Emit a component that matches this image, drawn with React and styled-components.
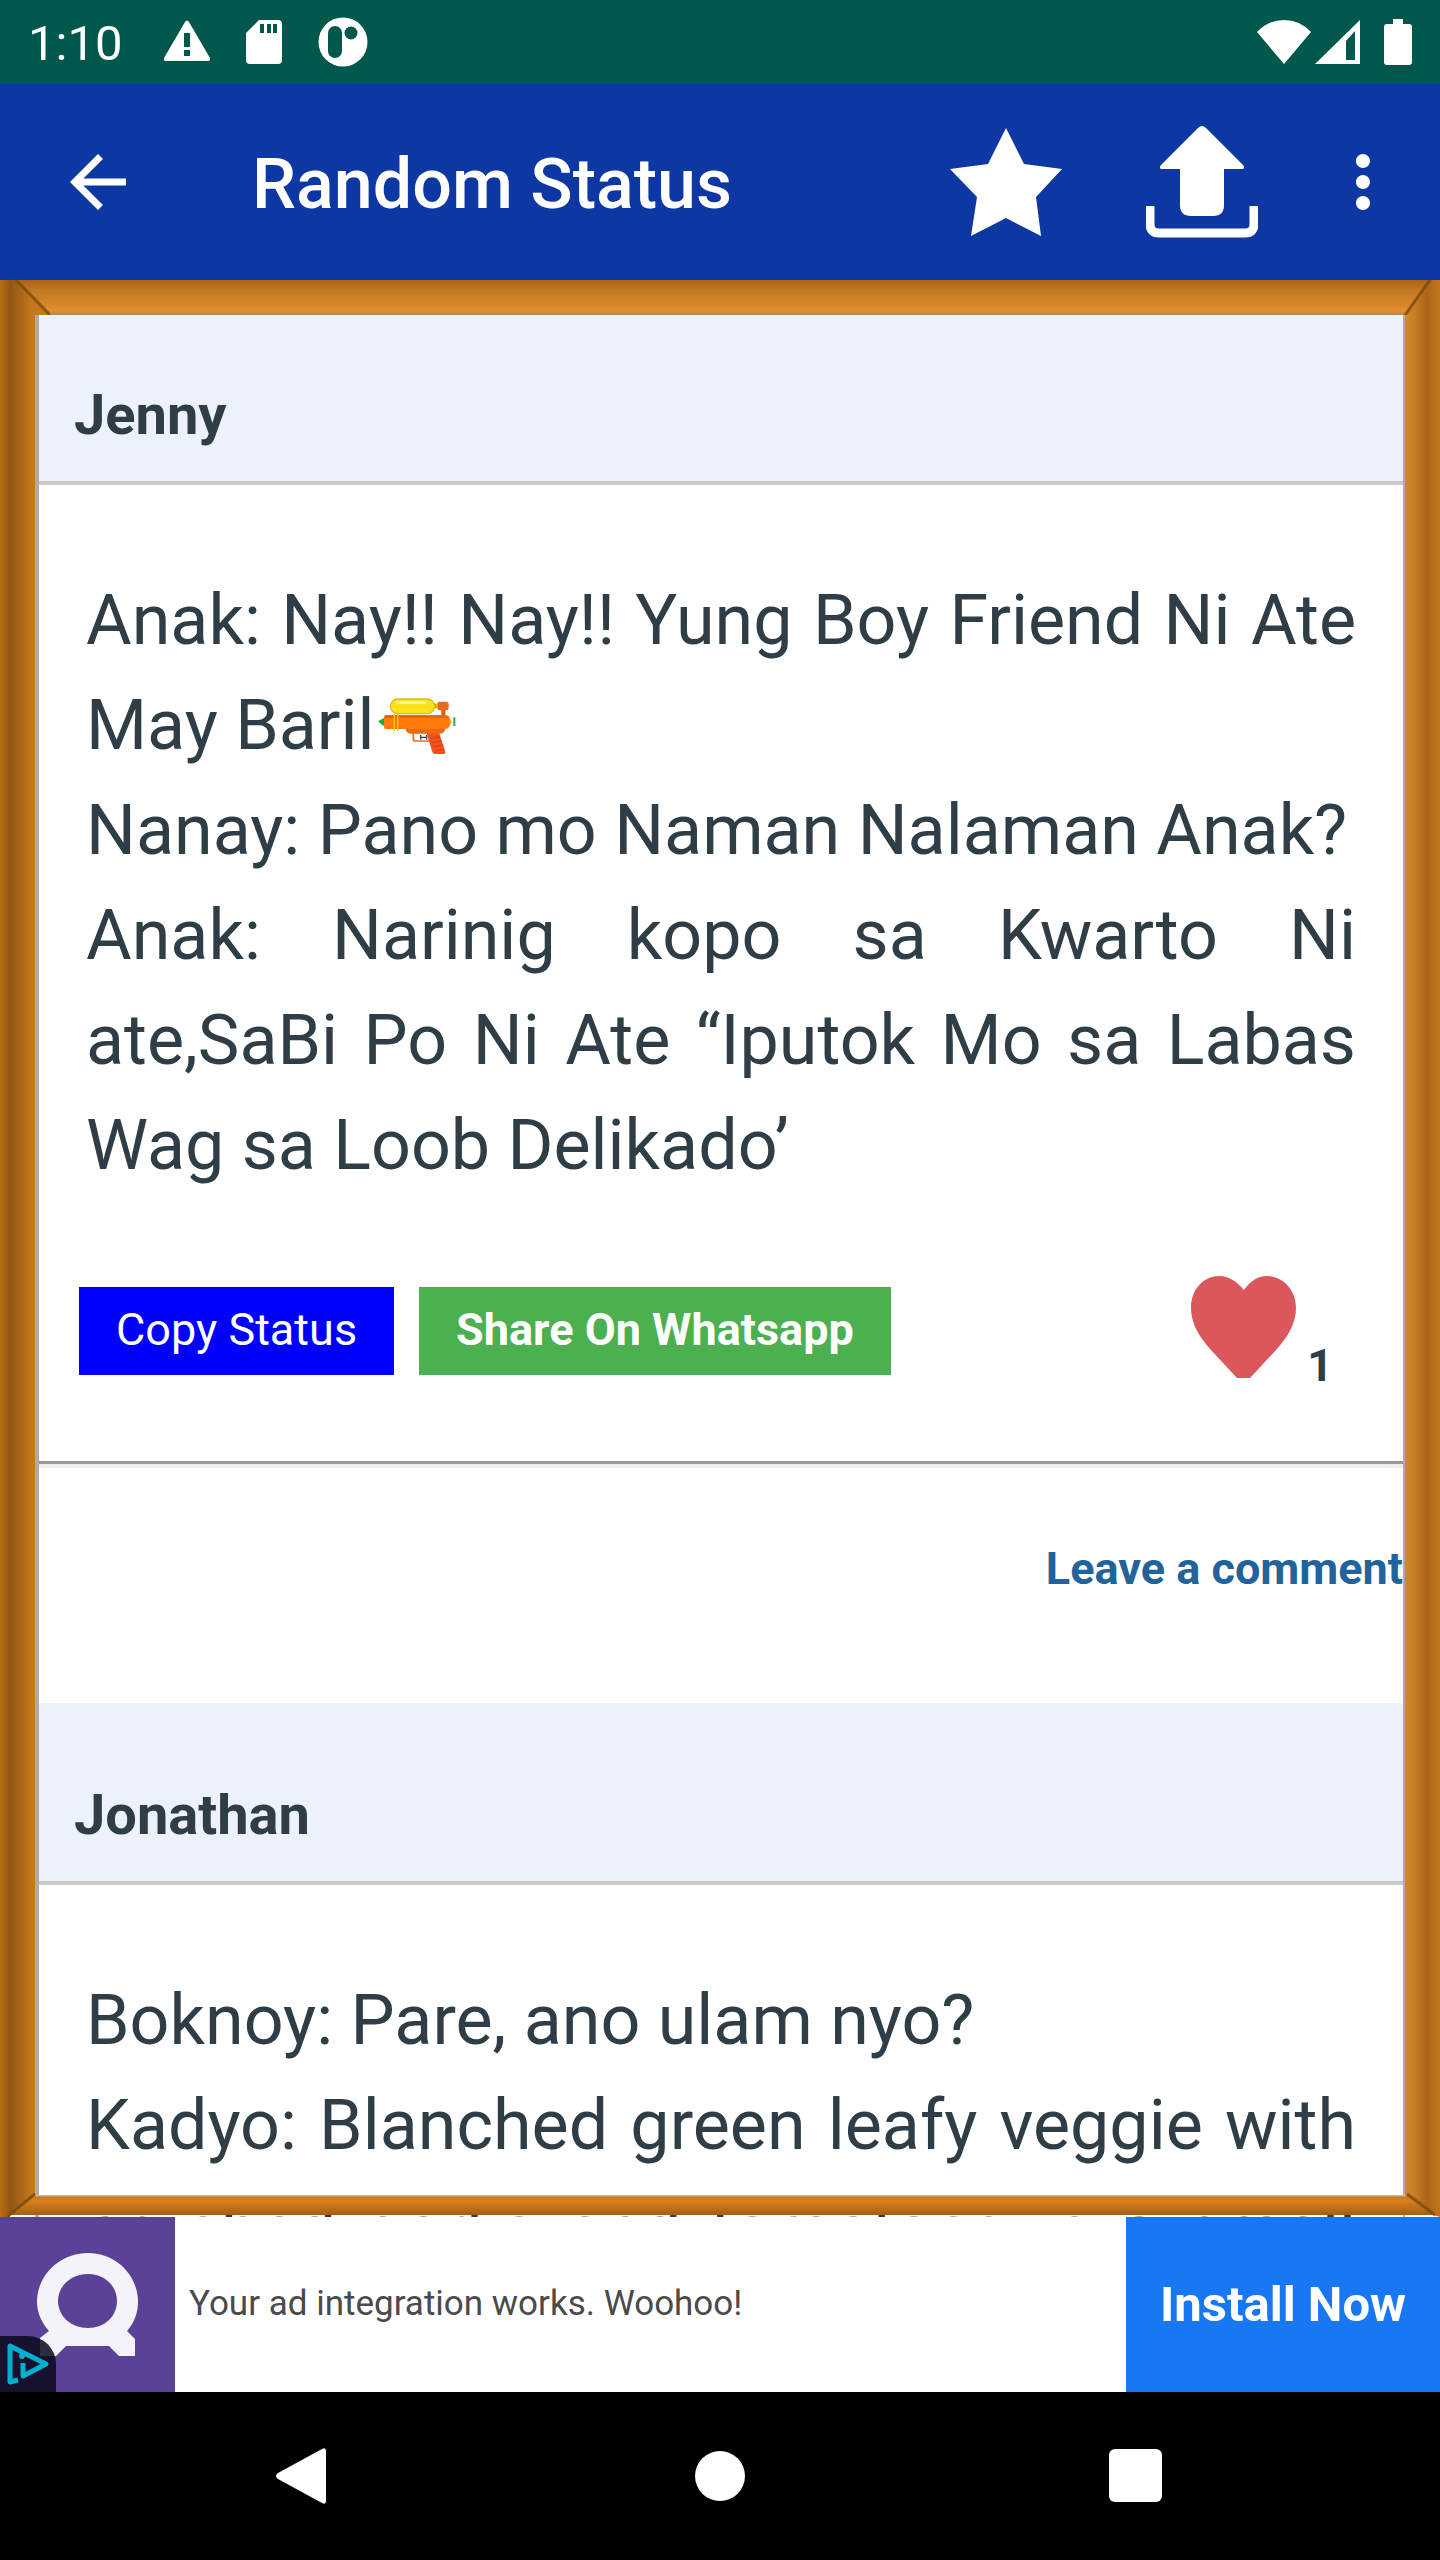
import React from 'react';
import styled, { createGlobalStyle } from 'styled-components';
import { MdArrowBack, MdMoreVert } from 'react-icons/md';

const posts = [
  {
    id: 1,
    author: 'Jenny',
    likes: 1,
    text: (
      <>
        Anak: Nay!! Nay!! Yung Boy Friend Ni Ate May Baril
        <WaterGun />
        <br />
        Nanay: Pano mo Naman Nalaman Anak?
        <br />
        Anak: Narinig kopo sa Kwarto Ni ate,SaBi&nbsp;Po Ni Ate “Iputok Mo sa Labas
        Wag sa Loob Delikado’
      </>
    ),
  },
  {
    id: 2,
    author: 'Jonathan',
    likes: 1,
    text: (
      <>
        Boknoy: Pare, ano ulam nyo?
        <br />
        Kadyo: Blanched green leafy veggie with crushed garlic and tomatoes in a small bowl
      </>
    ),
  },
];

export default function App() {
  return (
    <Screen>
      <GlobalStyle />
      <StatusBar>
        <Clock>1:10</Clock>
        <Notices>
          <WarningIcon />
          <SdCardIcon />
          <AppDotIcon />
        </Notices>
        <SystemIcons>
          <WifiIcon />
          <SignalIcon />
          <BatteryIcon />
        </SystemIcons>
      </StatusBar>

      <AppBar>
        <IconButton aria-label="Back">
          <MdArrowBack size={84} />
        </IconButton>
        <Title>Random Status</Title>
        <BarActions>
          <IconButton aria-label="Rate">
            <StarIcon />
          </IconButton>
          <IconButton aria-label="Share app">
            <UploadIcon />
          </IconButton>
        </BarActions>
        <IconButton aria-label="More options">
          <MdMoreVert size={84} />
        </IconButton>
      </AppBar>

      <Board>
        <Feed>
          {posts.map((post) => (
            <Post key={post.id} {...post} />
          ))}
        </Feed>
        <WoodFrame />
      </Board>

      <AdBanner>
        <AdLogo>
          <AdMark />
          <AdBadge>
            <AdChoicesIcon />
          </AdBadge>
        </AdLogo>
        <AdText>Your ad integration works. Woohoo!</AdText>
        <InstallButton>Install Now</InstallButton>
      </AdBanner>

      <NavBar>
        <NavButton aria-label="Back">
          <svg width="56" height="60" viewBox="0 0 56 60" fill="#fff">
            <path d="M2 27 46 3q4-2 4 2v50q0 4-4 2L2 33q-4-3 0-6z" />
          </svg>
        </NavButton>
        <NavButton aria-label="Home">
          <svg width="56" height="60" viewBox="0 0 56 60" fill="#fff">
            <circle cx="28" cy="30" r="25" />
          </svg>
        </NavButton>
        <NavButton aria-label="Recents">
          <svg width="56" height="60" viewBox="0 0 56 60" fill="#fff">
            <rect x="1" y="3" width="53" height="53" rx="6" />
          </svg>
        </NavButton>
      </NavBar>
    </Screen>
  );
}

function Post({ author, text, likes }) {
  return (
    <Card>
      <Author>{author}</Author>
      <Message>{text}</Message>
      <Actions>
        <ActionButton bg="#0000ff">Copy Status</ActionButton>
        <ActionButton bg="#4caf50" bold>
          Share On Whatsapp
        </ActionButton>
        <Likes aria-label="Like">
          <HeartIcon />
          <LikeCount>{likes}</LikeCount>
        </Likes>
      </Actions>
      <Divider />
      <CommentRow>
        <CommentLink href="#comments">Leave a comment</CommentLink>
      </CommentRow>
    </Card>
  );
}

// the rails lie over the scrolling feed, the joints over the rails
function WoodFrame() {
  return (
    <>
      <TopRail />
      <BottomRail />
      <LeftRail />
      <RightRail />
      <Joint top left>
        <path d="m16 0 34 35" />
      </Joint>
      <Joint top>
        <path d="M25 0 0 35" transform="translate(15)" />
      </Joint>
      <Joint left>
        <path d="M35 12 8 34" />
      </Joint>
      <Joint>
        <path d="m17 12 28 21" />
      </Joint>
    </>
  );
}

function WarningIcon() {
  return (
    <svg width="46" height="46" viewBox="0 0 46 46" fill="#fff">
      <path
        fillRule="evenodd"
        d="M21 3q2-3 4 0l21 36q1 3-2 3H2q-3 0-2-3zM20 14v14h6V14zM20 31v6h6v-6z"
      />
    </svg>
  );
}

function SdCardIcon() {
  return (
    <svg width="36" height="46" viewBox="0 0 36 46" fill="#fff">
      <path
        fillRule="evenodd"
        d="M13 1h19q4 0 4 4v36q0 4-4 4H4q-4 0-4-4V14zM14 5v9h4V5zM21 5v9h4V5zM27 5v9h4V5z"
      />
    </svg>
  );
}

function AppDotIcon() {
  return (
    <svg width="50" height="50" viewBox="0 0 50 50">
      <circle cx="25" cy="25" r="24.5" fill="#fff" />
      <rect x="10" y="9" width="14" height="32" rx="7" fill="#00574b" />
      <circle cx="33" cy="16" r="6.5" fill="#00574b" />
    </svg>
  );
}

function WifiIcon() {
  return (
    <svg width="54" height="46" viewBox="0 0 54 46" fill="#fff">
      <path d="M0 13Q11 1 27 1t27 12L27 45z" />
    </svg>
  );
}

function SignalIcon() {
  return (
    <svg width="45" height="46" viewBox="0 0 45 46" fill="#fff">
      <path fillRule="evenodd" d="M0 45 45 1v44zM31 22v19h9V12z" />
    </svg>
  );
}

function BatteryIcon() {
  return (
    <svg width="28" height="46" viewBox="0 0 28 46" fill="#fff">
      <path d="M9 0h10v5h6q3 0 3 3v35q0 3-3 3H3q-3 0-3-3V8q0-3 3-3h6z" />
    </svg>
  );
}

function StarIcon() {
  return (
    <svg width="112" height="112" viewBox="0 0 112 112" fill="#fff">
      <path d="m56 2 18 36 38 5-26 28 5 39-35-18-35 18 6-39L0 43l38-5z" />
    </svg>
  );
}

function UploadIcon() {
  return (
    <svg width="112" height="112" viewBox="0 0 112 112" fill="#fff">
      <path d="M52 2q4-4 8 0l37 37q3 4-2 4H78v36q0 11-11 11H45q-11 0-11-11V43H17q-5 0-2-4z" />
      <path d="M4 80v18q0 9 9 9h86q9 0 9-9V80" fill="none" stroke="#fff" strokeWidth="9" />
    </svg>
  );
}

function HeartIcon() {
  return (
    <svg width="105" height="102" viewBox="0 0 105 102" fill="#db575b">
      <path d="M53 14C60 4 68 0 76 0c14 0 29 12 29 32 0 15-8 29-20 42L59 102H46L20 74C8 61 0 47 0 32 0 12 14 0 28 0c10 0 17 5 25 14z" />
    </svg>
  );
}

function WaterGun() {
  return (
    <Emoji viewBox="110 105 249 180" role="img" aria-label="water pistol">
      <rect x="345" y="169" width="6" height="26" fill="#22a95c" />
      <path d="M119 181 135 172h8v22h-8z" fill="#12b53c" />
      <path d="M225 215v18q0 7 7 7h46" fill="none" stroke="#ef6c1a" strokeWidth="5" />
      <path d="M247 222v14m0-7h18m0-7v14" fill="none" stroke="#20525f" strokeWidth="4" />
      <path d="M264 214h38l19 60q0 5-5 5h-27q-5 0-7-6z" fill="#f4511e" />
      <path d="m279 233 26-5m-22 17 27-5m-23 17 28-5m-24 17 27-5" stroke="#d84315" strokeWidth="4" />
      <path d="M201 200h120q0 18-18 18h-82q-20 0-20-18z" fill="#e96c0c" />
      <path d="M144 162h176q10 0 15 11l4 11-5 11q-4 9-14 9H144q-7 0-7-7v-28q0-7 7-7z" fill="#ff7a0a" />
      <path d="M144 163h176q10 0 13 8H138q0-8 6-8z" fill="#e2680a" />
      <path d="M309 140h12v24h-12z" fill="#d85c15" />
      <rect x="297" y="122" width="34" height="26" rx="7" fill="#e66a1c" />
      <path d="M286 128h12v14h-12z" fill="#e3b412" />
      <rect x="154" y="112" width="137" height="48" rx="24" fill="#d9bd13" />
      <rect x="158" y="116" width="129" height="40" rx="20" fill="#fde01c" />
      <rect x="174" y="120" width="90" height="9" rx="4" fill="#fff59a" />
      <path d="M168 158v52m10-52v52" stroke="#f6c915" strokeWidth="4" />
      <path d="m333 173 8 10-8 11z" fill="#e3b412" />
    </Emoji>
  );
}

function AdMark() {
  return (
    <svg width="175" height="175" viewBox="0 0 175 175" aria-hidden="true">
      <path
        fill="#f5f3fa"
        fillRule="evenodd"
        d="M88 36c28 0 50 22 50 49 0 11-4 21-11 29l8 8v17h-16l-10-10H66l-10 10H40v-18l9-7c-7-8-12-18-12-29 0-27 23-49 51-49zM88 57c-17 0-30 12-30 27s13 27 30 27 29-12 29-27-12-27-29-27z"
      />
    </svg>
  );
}

function AdChoicesIcon() {
  return (
    <svg width="56" height="56" viewBox="0 0 56 56" fill="none" stroke="#00aecd" strokeLinejoin="round">
      <path d="M18 44 10 46V10l36 18-23 12V27" strokeWidth="5" />
      <circle cx="22" cy="20" r="3" fill="#00aecd" stroke="none" />
    </svg>
  );
}

const GlobalStyle = createGlobalStyle`
  * {
    box-sizing: border-box;
  }
  body {
    margin: 0;
    background: #000;
    font-family: Roboto, "Noto Sans", sans-serif;
  }
  button {
    font-family: inherit;
    border: 0;
    padding: 0;
    background: none;
    color: inherit;
  }
  svg {
    display: block;
    flex: none;
  }
`;

const Flex = styled.div`
  display: flex;
`;

const Screen = styled(Flex)`
  flex-direction: column;
  height: 100vh;
`;

const StatusBar = styled(Flex)`
  flex: none;
  align-items: center;
  height: 84px;
  padding: 0 28px;
  background: #00574b;
  color: #fff;
`;

const Clock = styled.span`
  padding-top: 4px;
  font-size: 49px;
  line-height: 56px;
`;

const Notices = styled(Flex)`
  align-items: center;
  gap: 36px;
  margin-left: 42px;
`;

const SystemIcons = styled(Flex)`
  gap: 4px;
  margin-left: auto;

  & > :last-child {
    margin-left: 20px;
  }
`;

const AppBar = styled.header`
  display: flex;
  flex: none;
  align-items: center;
  height: 196px;
  padding: 0 35px 0 56px;
  background: #0d38a3;
  color: #fff;
`;

const IconButton = styled.button`
  display: block;
`;

const Title = styled.h1`
  flex: 1;
  margin: 0 0 0 112px;
  padding-top: 4px;
  font-size: 70px;
  font-weight: 500;
  line-height: 84px;
`;

const BarActions = styled(Flex)`
  gap: 84px;
  margin-right: 63px;
`;

const Board = styled.main`
  position: relative;
  flex: 1;
  min-height: 0;
  overflow: hidden;
  background: #fff;
`;

const Feed = styled.div`
  padding: 23px 35px 0;
  color: #2f3e46;
`;

const Card = styled.article`
  border: solid #b5a7ae;
  border-width: 0 2px 0 4px;
`;

const Author = styled.h2`
  margin: 0;
  padding: 70px 35px 24px;
  border-bottom: 4px solid #ccc;
  background: #edf1fa;
  font-size: 56px;
  line-height: 84px;
`;

const Message = styled.p`
  margin: 0;
  padding: 83px 47px 0;
  font-size: 70px;
  line-height: 105px;
  text-align: justify;
`;

const Emoji = styled.svg`
  display: inline-block;
  width: 83px;
  height: 60px;
  vertical-align: -7px;
`;

const Actions = styled(Flex)`
  align-items: center;
  gap: 25px;
  height: 110px;
  margin: 78px 70px 75px 40px;
`;

const ActionButton = styled.button`
  && {
    padding: 0 37px 2px;
    background: ${(props) => props.bg};
    color: #fff;
  }
  height: 88px;
  font-size: 45px;
  font-weight: ${(props) => (props.bold ? 700 : 400)};
  line-height: 84px;
`;

const Likes = styled.button`
  display: flex;
  gap: 11px;
  height: 110px;
  margin-left: auto;
`;

const LikeCount = styled.span`
  align-self: flex-end;
  font-size: 45px;
  font-weight: 700;
  line-height: 40px;
`;

const Divider = styled.hr`
  height: 7px;
  margin: 0;
  border: solid #999;
  border-width: 3px 0 0;
  background: #eee;
`;

const CommentRow = styled(Flex)`
  justify-content: flex-end;
  padding: 66px 0 99px;
`;

const CommentLink = styled.a`
  color: #21639a;
  font-size: 45px;
  font-weight: 700;
  line-height: 70px;
  text-decoration: none;
`;

const Rail = styled.div`
  position: absolute;
`;

const TopRail = styled(Rail)`
  top: 0;
  left: 0;
  right: 0;
  height: 35px;
  background: linear-gradient(#ab621b, #c37823 30%, #d5862b 70%, #e88e2a 86%, #d58a35 93%, #a08a6a);
`;

const BottomRail = styled(Rail)`
  bottom: 2px;
  left: 0;
  right: 0;
  height: 20px;
  background: linear-gradient(#e3cfae, #c17c2b 10%, #dc8018 28%, #c0711a 60%, #a55e16);
`;

const LeftRail = styled(Rail)`
  top: 0;
  bottom: 0;
  left: 0;
  width: 50px;
  background: linear-gradient(90deg, #b96d1a, #925712 10px, #a8641a 20px, #c87819 32px, #c47a22);
  clip-path: polygon(0 0, 16px 0, 50px 35px, 35px 35px, 35px calc(100% - 22px), 10px calc(100% - 2px), 10px 100%, 0 100%);
`;

const RightRail = styled(Rail)`
  top: 0;
  bottom: 0;
  right: 0;
  width: 35px;
  background: linear-gradient(90deg, #d1872c, #ca7f25 8px, #ac6518 22px, #bb701b 30px, #c0751b);
  clip-path: polygon(25px 0, 100% 0, 100% 100%, 28px calc(100% - 2px), 0 calc(100% - 22px), 0 35px);
`;

const Joint = styled.svg.attrs({ width: 50, height: 35, viewBox: '0 0 50 35' })`
  position: absolute;
  ${(props) => (props.top ? 'top: 0;' : 'bottom: 0;')}
  ${(props) => (props.left ? 'left: 0;' : 'right: 0;')}
  stroke: #7a4a0c;
  stroke-opacity: 0.8;
  stroke-width: 3;
`;

const AdBanner = styled(Flex)`
  flex: none;
  align-items: center;
  height: 175px;
  background: #fff;
`;

const AdLogo = styled.div`
  position: relative;
  background: #5a4397;
`;

const AdBadge = styled.div`
  position: absolute;
  left: 0;
  bottom: 0;
  border-top-right-radius: 28px;
  background: rgba(12, 8, 28, 0.85);
`;

const AdText = styled.p`
  flex: 1;
  margin: 0;
  padding: 0 14px 2px;
  color: #4a4a4a;
  font-size: 35px;
  line-height: 42px;
`;

const InstallButton = styled.button`
  && {
    background: #1877f2;
    color: #fff;
  }
  align-self: stretch;
  width: 314px;
  font-size: 49px;
  font-weight: 700;
`;

const NavBar = styled.nav`
  display: flex;
  flex: none;
  justify-content: center;
  gap: 360px;
  padding: 54px 0;
  background: #000;
`;

const NavButton = styled.button`
  display: block;
`;
